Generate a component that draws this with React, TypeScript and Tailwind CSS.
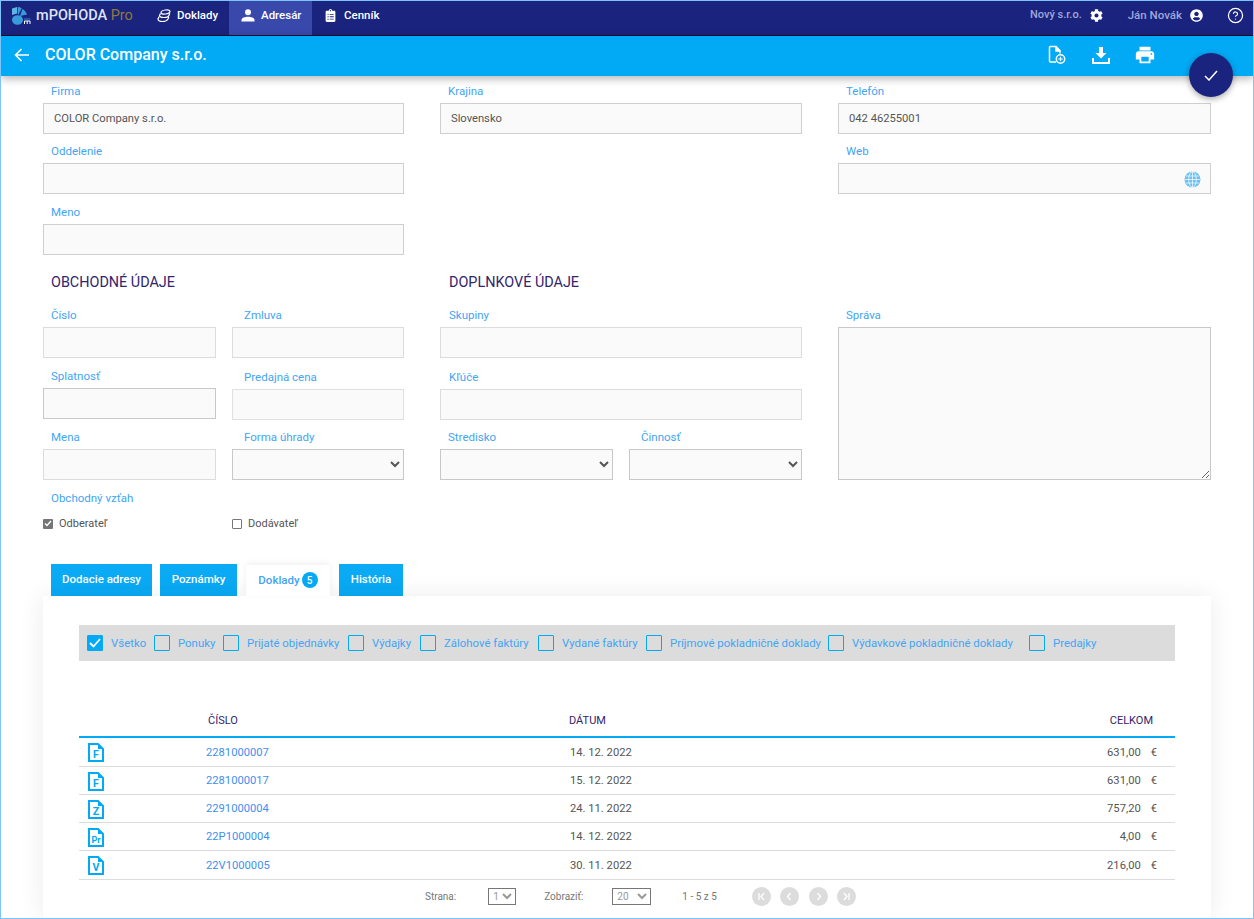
import type { ReactNode } from "react";
import { CircleHelp } from "lucide-react";
import { FaCog, FaUserCircle, FaClipboardList } from "react-icons/fa";
import { MdPrint } from "react-icons/md";

function Field({ label, className = "", boxClass = "border-[#cfcfcf]", children }: { label: string; className?: string; boxClass?: string; children?: ReactNode }) {
  return (
    <div className={`mb-[2.4px] ${className}`}>
      <div className="h-[27px] pl-2 pt-[8px] text-[11.5px] leading-[14px] text-[#42a5f5]">{label}</div>
      <div className={`flex h-[31px] items-center border bg-[#fafafa] px-[10px] pt-px text-[11.2px] text-[#555] ${boxClass}`}>{children}</div>
    </div>
  );
}

function SelectField({ label, className = "" }: { label: string; className?: string }) {
  return (
    <div className={`mb-[2.4px] ${className}`}>
      <div className="h-[27px] pl-3 pt-[8px] text-[11.5px] leading-[14px] text-[#42a5f5]">{label}</div>
      <select className="block h-[31px] w-full border border-[#c8c8c8] bg-[#fafafa] text-[11px] text-[#555]" />
    </div>
  );
}

function Logo() {
  return (
    <svg width="20" height="19" viewBox="0 0 20 19" className="shrink-0">
      <path d="M1 2.500 6 1v6.500L1 9z" fill="#5fb4e6" />
      <path d="M6.700 1c1.500 0 2.800.4 4 1.200L7.500 8.500H6.700z" fill="#3a9bdc" />
      <path d="M11.500 3c2 1.200 3.500 3 4.500 5.500l-7 1.500z" fill="#3a9bdc" />
      <ellipse cx="6.500" cy="14" rx="5.500" ry="4.800" fill="#3a9bdc" />
      <path d="M13.500 18v-3h5.500v3M16.200 15v3" stroke="#fff" strokeWidth="1" fill="none" />
      <path d="M13 13h6.500" stroke="#3a9bdc" strokeWidth="0.800" />
    </svg>
  );
}

function StackIcon() {
  return (
    <svg width="14" height="14" viewBox="0 0 14 14" fill="none" stroke="#fff" strokeWidth="1.200" className="shrink-0">
      <ellipse cx="8.500" cy="3" rx="4.500" ry="2" transform="rotate(-8 8.500 3)" />
      <path d="M3.500 4.500 2.500 6.500c0 1.200 2 2 4.500 2s4.500-.8 5-2.300l.8-2" />
      <path d="M2 7.800 1 10c0 1.500 2 2.500 4.500 2.500 2.600 0 4.700-1 5.500-2.500l.8-2" />
    </svg>
  );
}

function PersonIcon() {
  return (
    <svg width="14" height="13" viewBox="0 0 14 13" fill="#fff" className="shrink-0">
      <circle cx="7" cy="3.300" r="3" />
      <path d="M0.500 12.500V11c0-2.200 3.300-3.200 6.500-3.200s6.500 1 6.500 3.200v1.500z" />
    </svg>
  );
}

function TopBar() {
  return (
    <nav className="flex h-[34px] shrink-0 items-stretch bg-[#1a237e] text-white">
      <div className="flex w-[228px] items-center pb-[5px]">
        <div className="ml-[10px]"><Logo /></div>
        <span className="ml-[5px] whitespace-nowrap text-[14.5px] font-medium text-[#dfe3f5]">mPOHODA <span className="font-normal text-[#8f7a3e]">Pro</span></span>
        <div className="ml-[24px] flex items-center gap-[6px]">
          <StackIcon />
          <span className="text-[11.5px] font-medium">Doklady</span>
        </div>
      </div>
      <div className="flex w-[83px] items-center gap-[6px] bg-[#3949ab] pb-[5px] pl-[12px]">
        <PersonIcon />
        <span className="text-[11.5px] font-medium">Adresár</span>
      </div>
      <div className="ml-[12px] flex items-center gap-[7px] pb-[5px]">
        <FaClipboardList size={13} />
        <span className="text-[11.5px] font-medium">Cenník</span>
      </div>
      <div className="ml-auto flex items-center pb-[5px] text-[11.5px] font-medium text-[#9fa8da]">
        <span className="text-[11px]">Nový s.r.o.</span>
        <FaCog size={13} className="ml-[8px] text-white" />
        <span className="ml-[25px]">Ján Novák</span>
        <FaUserCircle size={13} className="ml-[8px] text-white" />
        <CircleHelp size={17} strokeWidth={1.700} className="ml-[24px] mr-[9px] text-white" />
      </div>
    </nav>
  );
}

function TitleBar() {
  return (
    <header className="relative z-10 flex h-[41px] shrink-0 items-center border-t border-[#0b0b2e] bg-[#02a9f4] pb-[2px] text-white shadow-[0_3px_8px_rgba(0,0,0,0.28)]">
      <svg width="16" height="14" viewBox="0 0 16 14" fill="none" stroke="#fff" strokeWidth="1.600" className="ml-[13px]">
        <path d="M15 7H2M7.500 1 1.500 7l6 6" />
      </svg>
      <h1 className="ml-[15px] text-[16px] font-medium">COLOR Company s.r.o.</h1>
      <div className="ml-auto flex items-center">
        <svg width="18" height="20" viewBox="0 0 18 20" fill="none" stroke="#fff" strokeWidth="1.500">
          <path d="M8 17H2.500a1 1 0 0 1-1-1V2.500a1 1 0 0 1 1-1H8l4 4v3" />
          <path d="M8 1.500V6h4" fill="#fff" />
          <circle cx="12.500" cy="14" r="4.200" />
          <path d="M12.500 11.800v4.400M10.300 14h4.400" strokeWidth="1.200" />
        </svg>
        <svg width="18" height="18" viewBox="0 0 18 18" fill="#fff" className="ml-[26px]">
          <path d="M7 1h4v6h3.500L9 12.500 3.500 7H7z" />
          <path d="M0 12h2v4h14v-4h2v6H0z" />
        </svg>
        <MdPrint size={22} className="ml-[24px] mr-[97px]" />
      </div>
    </header>
  );
}

function Fab() {
  return (
    <div className="absolute left-[1188px] top-[52px] z-20 flex h-[44px] w-[44px] items-center justify-center rounded-full bg-[#1a237e] shadow-[0_2px_6px_rgba(0,0,0,0.35)]">
      <svg width="14" height="11" viewBox="0 0 14 11" fill="none" stroke="#fff" strokeWidth="1.500">
        <path d="M1 6l4 4 8-9" />
      </svg>
    </div>
  );
}

function GlobeIcon() {
  return (
    <svg width="17" height="17" viewBox="0 0 17 17" className="ml-auto mr-[-1px]" fill="#6cc0f2" stroke="#fff" strokeWidth="0.700">
      <circle cx="8.500" cy="8.500" r="8" stroke="none" />
      <path d="M1 8.500h15M2 5h13M2 12h13M8.500.5v16" fill="none" />
      <ellipse cx="8.500" cy="8.500" rx="3.800" ry="8" fill="none" />
    </svg>
  );
}

function Heading({ children }: { children: ReactNode }) {
  return <h2 className="h-[25px] text-[14.4px] leading-[16px] text-[#33246e]">{children}</h2>;
}

function Form() {
  return (
    <div className="ml-[42px] grid w-[1168px] grid-cols-[361px_362px_373px] gap-x-[36px]">
      <div>
        <Field label="Firma">COLOR Company s.r.o.</Field>
        <Field label="Oddelenie" />
        <Field label="Meno" />
      </div>
      <div>
        <Field label="Krajina">Slovensko</Field>
      </div>
      <div>
        <Field label="Telefón">042 46255001</Field>
        <Field label="Web"><GlobeIcon /></Field>
      </div>

      <div className="pt-[18px]">
        <div className="pl-2"><Heading>OBCHODNÉ ÚDAJE</Heading></div>
        <div className="grid grid-cols-[173px_172px] gap-x-[16px]">
          <Field label="Číslo" boxClass="border-[#dcdcdc]" />
          <Field label="Zmluva" boxClass="border-[#dcdcdc]" className="[&>div:first-child]:pl-3" />
          <Field label="Splatnosť" boxClass="border-[#c8c8c8]" className="pt-[0.6px]" />
          <Field label="Predajná cena" boxClass="border-[#e0e0e0]" className="pt-[1.6px] [&>div:first-child]:pl-3" />
          <Field label="Mena" boxClass="border-[#dcdcdc]" className="-mt-[1px]" />
          <SelectField label="Forma úhrady" className="-mt-[1px]" />
        </div>
        <div className="pl-2 pt-[9px] text-[11.5px] leading-[14px] text-[#42a5f5]">Obchodný vzťah</div>
        <div className="mt-[12px] grid grid-cols-[189px_172px] text-[11px] leading-[14px] text-[#555]">
          <label className="flex items-center gap-[6px]">
            <span className="flex h-[10px] w-[10px] items-center justify-center rounded-[1px] bg-[#757575]">
              <svg width="8" height="7" viewBox="0 0 8 7" fill="none" stroke="#fff" strokeWidth="1.400"><path d="M1 3.500 3 5.500 7 1" /></svg>
            </span>
            Odberateľ
          </label>
          <label className="flex items-center gap-[6px]">
            <span className="h-[10px] w-[10px] rounded-[1px] border border-[#777] bg-white" />
            Dodávateľ
          </label>
        </div>
      </div>

      <div className="pt-[18px]">
        <div className="pl-[9px]"><Heading>DOPLNKOVÉ ÚDAJE</Heading></div>
        <div className="[&>div>div:first-child]:pl-[9px]">
          <Field label="Skupiny" boxClass="border-[#dcdcdc]" />
          <Field label="Kľúče" boxClass="border-[#dcdcdc]" className="pt-[1.6px]" />
        </div>
        <div className="-mt-[1px] grid grid-cols-[173px_173px] gap-x-[16px]">
          <SelectField label="Stredisko" className="[&>div:first-child]:pl-2" />
          <SelectField label="Činnosť" />
        </div>
      </div>

      <div className="pt-[43px]">
        <div className="h-[27px] pl-2 pt-[8px] text-[11.5px] leading-[14px] text-[#42a5f5]">Správa</div>
        <textarea readOnly className="block h-[153px] w-full border border-[#c8c8c8] bg-[#fafafa]" />
      </div>
    </div>
  );
}

const FILTERS = [
  { label: "Všetko", width: "w-[67px]", checked: true },
  { label: "Ponuky", width: "w-[69px]" },
  { label: "Prijaté objednávky", width: "w-[125px]" },
  { label: "Výdajky", width: "w-[72px]" },
  { label: "Zálohové faktúry", width: "w-[118px]" },
  { label: "Vydané faktúry", width: "w-[108px]" },
  { label: "Príjmové pokladničné doklady", width: "w-[182px]" },
  { label: "Výdavkové pokladničné doklady", width: "w-[201px]" },
  { label: "Predajky", width: "w-[80px]" },
];

function Filters() {
  return (
    <div className="flex h-[36px] items-center bg-[#dcdcdc] pl-[8px]">
      {FILTERS.map((f) => (
        <div key={f.label} className={`flex shrink-0 items-center whitespace-nowrap ${f.width}`}>
          <span className={`flex h-[16px] w-[16px] shrink-0 items-center justify-center rounded-[1px] border border-[#02a9f4] ${f.checked ? "bg-[#02a9f4]" : ""}`}>
            {f.checked && (
              <svg width="12" height="10" viewBox="0 0 12 10" fill="none" stroke="#fff" strokeWidth="1.800"><path d="M1 5l3.500 3.500L11 1" /></svg>
            )}
          </span>
          <span className="ml-[8px] pt-px text-[11.4px] text-[#42a5f5]">{f.label}</span>
        </div>
      ))}
    </div>
  );
}

const ROWS = [
  { mark: "F", num: "2281000007", date: "14. 12. 2022", total: "631,00", h: "h-[29px]" },
  { mark: "F", num: "2281000017", date: "15. 12. 2022", total: "631,00", h: "h-[28px]" },
  { mark: "Z", num: "2291000004", date: "24. 11. 2022", total: "757,20", h: "h-[28px]" },
  { mark: "Pr", num: "22P1000004", date: "14. 12. 2022", total: "4,00", h: "h-[28px]" },
  { mark: "V", num: "22V1000005", date: "30. 11. 2022", total: "216,00", h: "h-[29px]" },
];

function DocIcon({ mark }: { mark: string }) {
  return (
    <svg width="16" height="19" viewBox="0 0 16 19" className="shrink-0">
      <path d="M1 1h9l5 5v12H1z" fill="none" stroke="#02a9f4" strokeWidth="2" />
      <path d="M10 1v5h5z" fill="#02a9f4" />
      <text x="8" y="15" textAnchor="middle" fontSize={mark.length > 1 ? "9" : "10.500"} fontWeight="700" fill="#02a9f4" fontFamily="Roboto, sans-serif">{mark}</text>
    </svg>
  );
}

function PagerButton({ d }: { d: string }) {
  return (
    <span className="flex h-[19px] w-[19px] items-center justify-center rounded-full bg-[#dcdcdc]">
      <svg width="11" height="11" viewBox="0 0 11 11" fill="none" stroke="#fff" strokeWidth="1.300"><path d={d} /></svg>
    </span>
  );
}

function DocTable() {
  return (
    <div className="mx-[36px]">
      <div className="mt-[46px] grid h-[31px] grid-cols-[129px_361px_1fr] items-center border-b-2 border-[#02a9f4] text-[11px] text-[#33246e]">
        <span className="col-start-2">ČÍSLO</span>
        <div className="col-start-3 flex justify-between pr-[22px]">
          <span>DÁTUM</span>
          <span>CELKOM</span>
        </div>
      </div>
      {ROWS.map((r) => (
        <div key={r.num} className={`grid grid-cols-[127px_364px_1fr] items-center border-b border-[#dcdcdc] pt-[2px] text-[11.2px] ${r.h}`}>
          <span className="pl-[9px]"><DocIcon mark={r.mark} /></span>
          <span className="text-[#3f8ff0]">{r.num}</span>
          <span className="flex justify-between pr-[18px] text-[#555]">
            <span>{r.date}</span>
            <span>{r.total}<span className="ml-[10px]">€</span></span>
          </span>
        </div>
      ))}
      <div className="flex h-[34px] items-center text-[10px] text-[#777]">
        <span className="ml-[346px]">Strana:</span>
        <select className="ml-[32px] h-[17px] w-[28px] border border-[#777] bg-white text-[10px] text-[#999]"><option>1</option></select>
        <span className="ml-[28px]">Zobraziť:</span>
        <select className="ml-[29px] h-[17px] w-[39px] border border-[#777] bg-white text-[10px] text-[#999]"><option>20</option></select>
        <span className="ml-[31px]">1 - 5 z 5</span>
        <span className="ml-[35px] flex gap-[9.500px]">
          <PagerButton d="M3 2v7M8 2 5 5.500 8 9" />
          <PagerButton d="M6.500 2 3.500 5.500l3 3.500" />
          <PagerButton d="M4.500 2l3 3.500-3 3.500" />
          <PagerButton d="M8 2v7M3 2l3 3.500L3 9" />
        </span>
      </div>
    </div>
  );
}

function Tabs() {
  const blue = "flex h-[32px] items-center justify-center bg-[#0aaaf5] text-[11.500px] font-medium text-white";
  return (
    <div className="ml-[50px] mt-[33px] flex items-end">
      <div className={`${blue} w-[101px]`}>Dodacie adresy</div>
      <div className={`${blue} ml-[8px] w-[77px]`}>Poznámky</div>
      <div className="relative z-10 ml-[9px] flex h-[31px] w-[84px] items-center justify-center gap-[2px] bg-white text-[11.500px] font-medium text-[#42a5f5] shadow-[0_-2px_6px_rgba(0,0,0,0.06)]">
        Doklady
        <span className="flex h-[16px] w-[16px] items-center justify-center rounded-full bg-[#02a9f4] text-[10px] text-white">5</span>
      </div>
      <div className={`${blue} ml-[9px] w-[64px]`}>História</div>
    </div>
  );
}

export default function App() {
  return (
    <div className="relative flex h-[919px] flex-col overflow-hidden border border-[#7cc4fb] bg-white font-['Roboto',sans-serif]">
      <TopBar />
      <TitleBar />
      <Fab />
      <Form />
      <Tabs />
      <section className="relative ml-[42px] w-[1168px] flex-1 bg-white pt-[29px] shadow-[0_0_24px_rgba(0,0,0,0.08)]">
        <div className="mx-[36px]"><Filters /></div>
        <DocTable />
      </section>
    </div>
  );
}
